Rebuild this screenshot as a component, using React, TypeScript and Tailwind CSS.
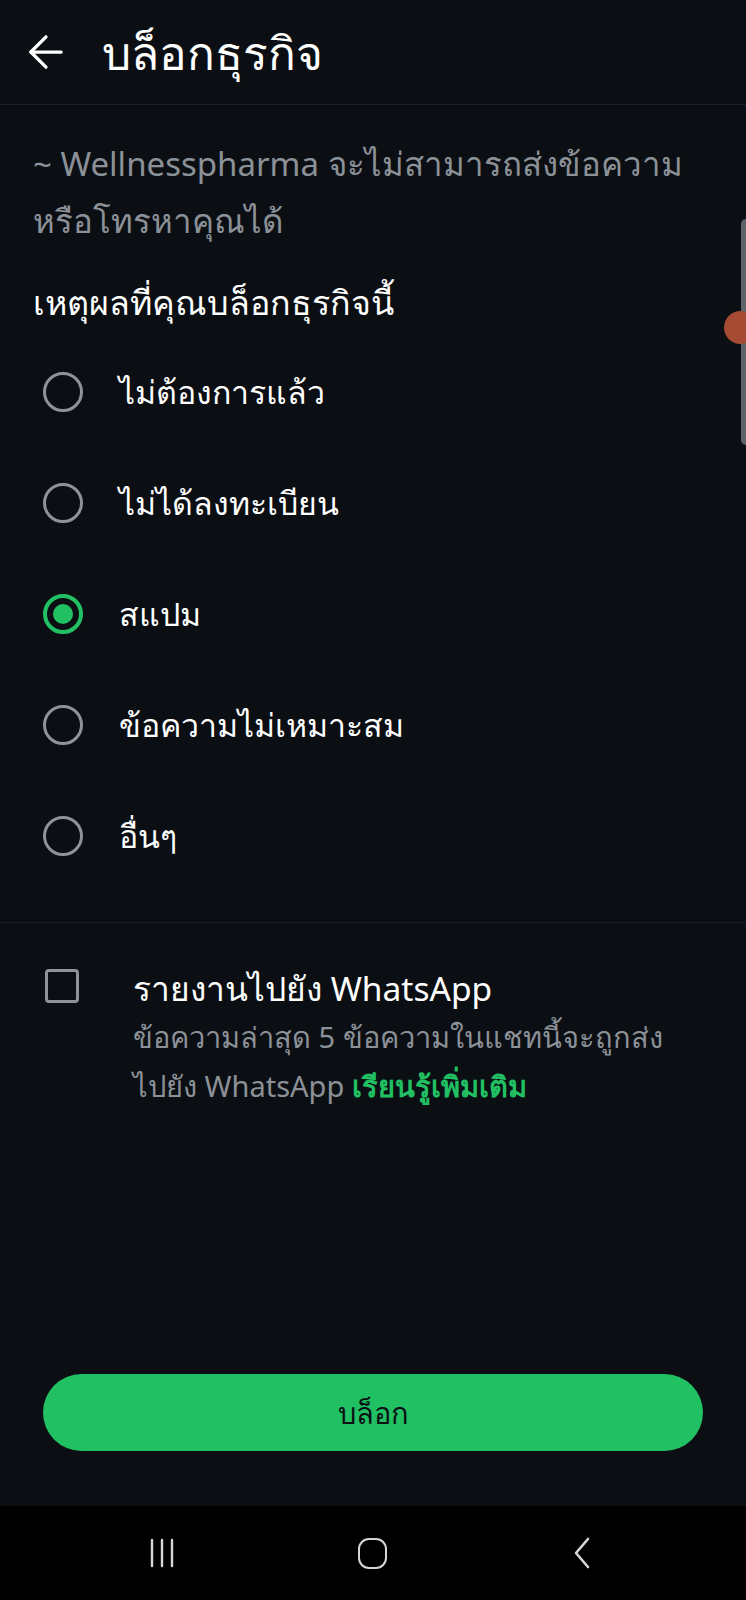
import { ArrowLeft } from "lucide-react"

const REASONS = [
  "ไม่ต้องการแล้ว",
  "ไม่ได้ลงทะเบียน",
  "สแปม",
  "ข้อความไม่เหมาะสม",
  "อื่นๆ",
]

function Radio({ checked }: { checked: boolean }) {
  if (checked) {
    return (
      <span className="w-[40px] h-[40px] rounded-full border-[4px] border-[#21c063] flex items-center justify-center shrink-0">
        <span className="w-[20px] h-[20px] rounded-full bg-[#21c063]" />
      </span>
    )
  }
  return <span className="w-[40px] h-[40px] rounded-full border-[3.5px] border-[#8d9399] shrink-0" />
}

export default function App() {
  const selected = 2

  return (
    <div
      className="relative w-full h-[1600px] bg-[#0b0f14] flex flex-col overflow-hidden"
      style={{ fontFamily: '"Noto Sans", Roboto, "DejaVu Sans", sans-serif' }}
    >
      {/* Header */}
      <header className="h-[105px] shrink-0 flex items-center px-[20px] border-b border-[#1a2028]">
        <ArrowLeft size={52} strokeWidth={1.5} className="text-white" />
        <h1 className="ml-[30px] text-[46px] text-white leading-none">บล็อกธุรกิจ</h1>
      </header>

      {/* Body */}
      <div className="flex-1 flex flex-col">
        <p className="pt-[30px] px-[33px] text-[33px] leading-[57px] text-[#8c9198]">
          ~ Wellnesspharma จะไม่สามารถส่งข้อความ<br />หรือโทรหาคุณได้
        </p>

        <p className="mt-[25px] px-[33px] text-[34px] leading-[57px] text-white">
          เหตุผลที่คุณบล็อกธุรกิจนี้
        </p>

        <ul className="mt-[5px] flex flex-col">
          {REASONS.map((r, i) => (
            <li key={r} className="h-[111px] flex items-center pl-[43px] gap-[36px]">
              <Radio checked={i === selected} />
              <span className="text-[32px] text-white leading-none">{r}</span>
            </li>
          ))}
        </ul>

        <div className="mt-[31px] border-t border-[#1a2028]" />

        {/* Report */}
        <div className="flex items-start pl-[45px] pr-[30px] pt-[41px]">
          <span className="mt-[5px] w-[34px] h-[34px] rounded-[4px] border-[3.5px] border-[#8d9399] shrink-0" />
          <div className="ml-[54px] flex flex-col">
            <span className="text-[33.5px] leading-[48px] text-white">รายงานไปยัง WhatsApp</span>
            <span className="text-[29px] leading-[49px] text-[#8c9198]">
              ข้อความล่าสุด 5 ข้อความในแชทนี้จะถูกส่ง<br />
              ไปยัง WhatsApp <span className="font-bold text-[#21c063]">เรียนรู้เพิ่มเติม</span>
            </span>
          </div>
        </div>

        <div className="flex-1" />

        {/* Block button */}
        <div className="px-[43px] pb-[55px]">
          <button className="w-full h-[77px] rounded-full bg-[#21c063] text-[#0a1014] text-[29px]">
            บล็อก
          </button>
        </div>
      </div>

      {/* System nav bar */}
      <nav className="h-[94px] shrink-0 bg-black flex items-center pl-[142px] gap-[170px]">
        <span className="w-[40px] flex justify-center">
          <svg width="30" height="32" viewBox="0 0 30 32" fill="none" stroke="#d6d6d6" strokeWidth="2.4" strokeLinecap="round">
            <line x1="5" y1="3" x2="5" y2="29" />
            <line x1="15" y1="3" x2="15" y2="29" />
            <line x1="25" y1="3" x2="25" y2="29" />
          </svg>
        </span>
        <span className="w-[40px] flex justify-center">
          <span className="w-[29px] h-[31px] rounded-[11px] border-[2.6px] border-[#d6d6d6]" />
        </span>
        <span className="w-[40px] flex justify-center">
          <svg width="24" height="34" viewBox="0 0 24 34" fill="none" stroke="#d6d6d6" strokeWidth="2.6" strokeLinecap="round" strokeLinejoin="round">
            <polyline points="18,3 6,17 18,31" />
          </svg>
        </span>
      </nav>

      {/* Scroll indicator */}
      <div className="absolute right-0 top-[219px] w-[5px] h-[226px] rounded-l-full bg-[#5e6368]" />
      <div className="absolute right-[-11px] top-[311px] w-[33px] h-[33px] rounded-full bg-[#a54a33]" />
    </div>
  )
}
